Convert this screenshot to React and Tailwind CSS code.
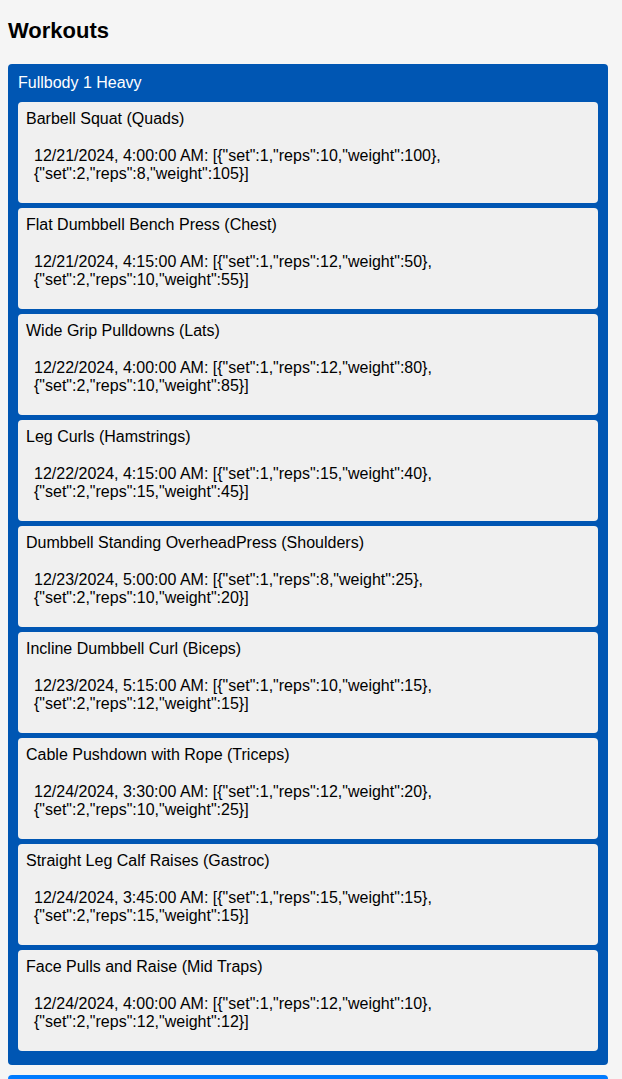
import React from 'react';

const workouts = [
  {
    name: 'Fullbody 1 Heavy',
    exercises: [
      { name: 'Barbell Squat (Quads)', date: '12/21/2024, 4:00:00 AM', sets: [{ set: 1, reps: 10, weight: 100 }, { set: 2, reps: 8, weight: 105 }] },
      { name: 'Flat Dumbbell Bench Press (Chest)', date: '12/21/2024, 4:15:00 AM', sets: [{ set: 1, reps: 12, weight: 50 }, { set: 2, reps: 10, weight: 55 }] },
      { name: 'Wide Grip Pulldowns (Lats)', date: '12/22/2024, 4:00:00 AM', sets: [{ set: 1, reps: 12, weight: 80 }, { set: 2, reps: 10, weight: 85 }] },
      { name: 'Leg Curls (Hamstrings)', date: '12/22/2024, 4:15:00 AM', sets: [{ set: 1, reps: 15, weight: 40 }, { set: 2, reps: 15, weight: 45 }] },
      { name: 'Dumbbell Standing OverheadPress (Shoulders)', date: '12/23/2024, 5:00:00 AM', sets: [{ set: 1, reps: 8, weight: 25 }, { set: 2, reps: 10, weight: 20 }] },
      { name: 'Incline Dumbbell Curl (Biceps)', date: '12/23/2024, 5:15:00 AM', sets: [{ set: 1, reps: 10, weight: 15 }, { set: 2, reps: 12, weight: 15 }] },
      { name: 'Cable Pushdown with Rope (Triceps)', date: '12/24/2024, 3:30:00 AM', sets: [{ set: 1, reps: 12, weight: 20 }, { set: 2, reps: 10, weight: 25 }] },
      { name: 'Straight Leg Calf Raises (Gastroc)', date: '12/24/2024, 3:45:00 AM', sets: [{ set: 1, reps: 15, weight: 15 }, { set: 2, reps: 15, weight: 15 }] },
      { name: 'Face Pulls and Raise (Mid Traps)', date: '12/24/2024, 4:00:00 AM', sets: [{ set: 1, reps: 12, weight: 10 }, { set: 2, reps: 12, weight: 12 }] }
    ]
  },
  { name: 'Fullbody 2 Light', exercises: [] }
];

const App = () => {
  return (
    <div className="min-h-screen bg-[#f5f5f5] pl-2 pr-[14px] pb-6 font-['Liberation_Sans',Arial,sans-serif] text-[16px] leading-[18px] text-black">
      {/* Header */}
      <h2 className="pt-[18px] pb-[20px] text-[22px] leading-[26px] font-bold">Workouts</h2>

      {/* Workout groups */}
      <div className="flex flex-col gap-[10px]">
        {workouts.map((workout, wIdx) => (
          <div
            key={wIdx}
            className={`rounded-[4px] px-[10px] pt-[10px] pb-[14px] ${wIdx === 0 ? 'bg-[#0056b3]' : 'bg-[#007bff]'}`}
          >
            <div className="mb-[10px] text-white">{workout.name}</div>
            <div className="flex flex-col gap-[5px]">
              {workout.exercises.map((ex, eIdx) => (
                <div key={eIdx} className="rounded-[4px] bg-[#f0f0f0] px-2 pt-[8px] pb-[5px]">
                  <div>{ex.name}</div>
                  <ul className="mt-[19px] mb-[15px] pl-2">
                    <li>
                      {ex.date}: {JSON.stringify(ex.sets)}
                    </li>
                  </ul>
                </div>
              ))}
            </div>
          </div>
        ))}
      </div>
    </div>
  );
};

export default App;
